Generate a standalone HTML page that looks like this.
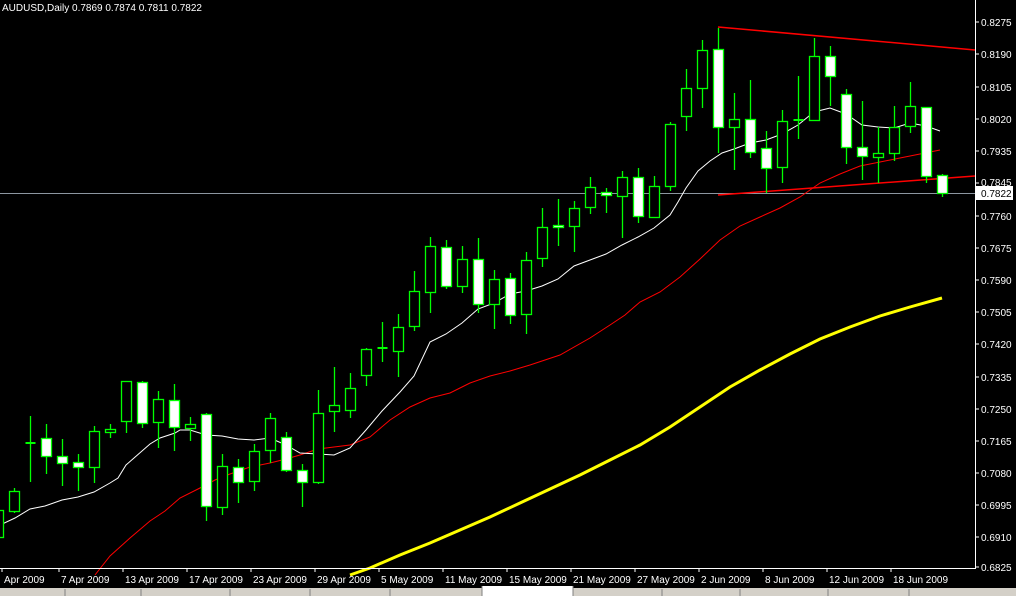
<!DOCTYPE html>
<html><head><meta charset="utf-8"><style>
html,body{margin:0;padding:0;background:#000;width:1016px;height:596px;overflow:hidden}
svg{display:block}
text{font-family:"Liberation Sans",sans-serif;font-size:10px;fill:#fff}
</style></head><body>
<svg width="1016" height="596" viewBox="0 0 1016 596" xmlns="http://www.w3.org/2000/svg">
<rect width="1016" height="596" fill="#000"/>
<text x="2" y="11" font-size="11">AUDUSD,Daily   0.7869 0.7874 0.7811 0.7822</text>
<line x1="0" y1="193.5" x2="975" y2="193.5" stroke="#8c96a0" stroke-width="1"/>
<polyline fill="none" stroke="#ffff00" stroke-width="3" points="350,575 370,568 400,555 430,543 460,530 490,517 520,503 550,489 580,475 610,460 640,445 670,427 700,407 730,387 760,370 790,354 820,339 850,327 880,316 910,307 942,298"/>
<polyline fill="none" stroke="#ff0000" stroke-width="1" points="95,575 110,556 130,538 150,521 165,511 180,498 200,488 215,480 230,474 250,467 270,463 286,459 300,455 318,449 334,447 350,445 370,437 390,420 410,407 430,398 450,393 470,383 490,376 510,371 530,365 560,355 590,338 610,325 625,315 640,302 660,292 680,277 700,259 720,240 740,226 760,217 780,208 800,197 820,183 840,174 860,166 880,162 900,158 920,154 940,150"/>
<polyline fill="none" stroke="#ffffff" stroke-width="1" points="0,525 15,518 30,509 45,506 62,500 78,497 94,492 110,483 118,478 126,465 134,458 150,444 160,438 175,433 180,430 190,430 206,435 222,436 238,439 254,440 270,438 286,445 300,453 318,454 334,455 350,448 366,430 382,411 400,392 414,376 430,342 446,334 462,323 478,309 494,303 510,294 526,291 542,286 558,279 574,266 590,260 606,254 622,245 638,237 654,228 670,215 678,202 686,188 698,171 710,161 722,153 734,149 750,143 766,140 782,134 798,125 814,112 830,108 846,114 862,125 878,127 894,128 910,123 926,126 940,131"/>
<line x1="718" y1="27" x2="975" y2="50" stroke="#ff0000" stroke-width="1.5"/>
<line x1="718" y1="195" x2="975" y2="176" stroke="#ff0000" stroke-width="1.5"/>
<g id="candles" stroke="#00ff00" stroke-width="1.3"></g>
<line x1="975.5" y1="0" x2="975.5" y2="568" stroke="#fff"/>
<line x1="0" y1="568.5" x2="976" y2="568.5" stroke="#fff"/>
<g id="ylab"></g>
<rect x="976" y="186" width="37" height="14" fill="#fff"/>
<text x="981" y="197" style="fill:#000">0.7822</text>
<g id="xlab"></g>
<rect x="0" y="588" width="1016" height="8" fill="#d4d0c8"/>
<rect x="482" y="586" width="91" height="10" fill="#fff"/>
<g stroke="#808080"><line x1="65" y1="589" x2="65" y2="596"/><line x1="141" y1="589" x2="141" y2="596"/><line x1="230" y1="589" x2="230" y2="596"/><line x1="310" y1="589" x2="310" y2="596"/><line x1="390" y1="589" x2="390" y2="596"/><line x1="482" y1="586" x2="482" y2="596"/><line x1="573" y1="586" x2="573" y2="596"/><line x1="662" y1="589" x2="662" y2="596"/><line x1="740" y1="589" x2="740" y2="596"/><line x1="828" y1="589" x2="828" y2="596"/><line x1="909" y1="589" x2="909" y2="596"/></g>
</svg>
<script>
var c=[[-2,505,510,537,540,'B'],[14,488,491,511,513,'B'],[30,416,443,445,482,'D'],[46,424,438,456,474,'W'],[62,439,456,463,486,'W'],[78,454,462,467,491,'W'],[94,426,431,467,483,'B'],[110,424,429,432,438,'B'],[126,381,381,421,433,'B'],[142,381,382,423,428,'W'],[158,391,399,422,448,'B'],[174,384,400,427,451,'W'],[190,417,424,428,441,'B'],[206,413,414,506,521,'W'],[222,454,466,507,515,'B'],[238,459,467,482,503,'W'],[254,444,451,481,491,'B'],[270,413,418,450,463,'B'],[286,432,437,470,472,'W'],[302,464,470,482,507,'W'],[318,390,413,482,484,'B'],[334,367,405,411,432,'B'],[350,373,388,410,418,'B'],[366,348,349,375,386,'B'],[382,322,348,350,362,'D'],[398,314,327,351,377,'B'],[414,271,291,326,331,'B'],[430,237,246,292,313,'B'],[446,240,247,286,289,'W'],[462,246,259,286,293,'B'],[478,238,259,304,313,'W'],[494,270,279,304,329,'B'],[510,273,278,315,324,'W'],[526,252,260,314,334,'B'],[542,208,227,258,267,'B'],[558,199,225,227,246,'W'],[574,201,208,226,252,'B'],[590,177,187,207,214,'B'],[606,188,192,195,213,'W'],[622,171,177,196,238,'B'],[638,168,177,216,223,'W'],[654,176,186,217,218,'B'],[670,122,124,186,191,'B'],[686,69,88,116,131,'B'],[702,40,50,88,108,'B'],[718,28,49,127,153,'W'],[734,93,119,127,170,'B'],[750,80,119,152,158,'W'],[766,131,148,168,193,'W'],[782,110,121,167,183,'B'],[798,76,120,122,139,'D'],[814,38,56,120,121,'B'],[830,46,56,76,106,'W'],[846,89,94,147,164,'W'],[862,101,147,156,180,'W'],[878,127,153,157,183,'B'],[894,106,127,153,161,'B'],[910,82,106,126,133,'B'],[926,107,107,176,183,'W'],[942,174,175,193,197,'W']];
var g=document.getElementById('candles'),s='';
c.forEach(function(a){var x=a[0]+.5;s+='<line x1="'+x+'" y1="'+a[1]+'" x2="'+x+'" y2="'+a[4]+'"/>';
if(a[5]=='D'){s+='<line x1="'+(x-5)+'" y1="'+a[2]+'" x2="'+(x+5)+'" y2="'+a[2]+'" stroke-width="2"/>';}
else s+='<rect x="'+(a[0]-4.5)+'" y="'+(a[2]+.5)+'" width="10" height="'+Math.max(1,a[3]-a[2])+'" fill="'+(a[5]=='W'?'#fff':'#000')+'"/>';});
g.innerHTML=s;
var L=['0.8275','0.8190','0.8105','0.8020','0.7935','0.7845','0.7760','0.7675','0.7590','0.7505','0.7420','0.7335','0.7250','0.7165','0.7080','0.6995','0.6910','0.6825'];
var Y=[22,54,87,119,151,183,216,248,280,312,344,377,409,441,473,505,537,567];
var t='';
for(var i=0;i<L.length;i++){var yy=Y[i];t+='<line x1="976" y1="'+yy+'" x2="979" y2="'+yy+'" stroke="#fff"/>';if(i!=5)t+='<text x="981" y="'+(yy+4)+'">'+L[i]+'</text>';else t+='<text x="981" y="'+(yy+3)+'">'+L[i]+'</text>';}
document.getElementById('ylab').innerHTML=t;
var d=['Apr 2009','7 Apr 2009','13 Apr 2009','17 Apr 2009','23 Apr 2009','29 Apr 2009','5 May 2009','11 May 2009','15 May 2009','21 May 2009','27 May 2009','2 Jun 2009','8 Jun 2009','12 Jun 2009','18 Jun 2009'],xs='';
d.forEach(function(l,i){var x=i==0?4:61+(i-1)*64;xs+='<line x1="'+(x-2)+'" y1="568" x2="'+(x-2)+'" y2="572" stroke="#fff"/><text x="'+x+'" y="583">'+l+'</text>';});
document.getElementById('xlab').innerHTML=xs;
</script>
</body></html>
